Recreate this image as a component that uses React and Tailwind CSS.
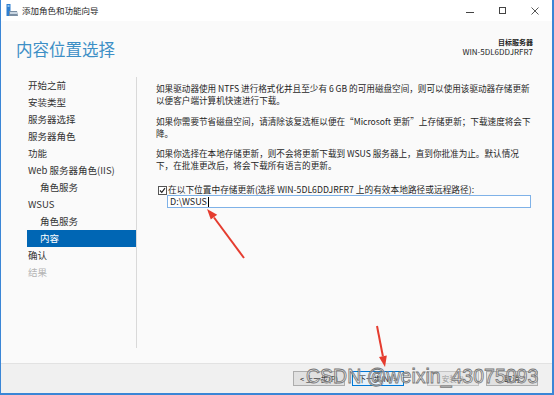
import React from "react";

const navItems = [
  { label: "开始之前" },
  { label: "安装类型" },
  { label: "服务器选择" },
  { label: "服务器角色" },
  { label: "功能" },
  { label: "Web 服务器角色(IIS)" },
  { label: "角色服务", sub: true },
  { label: "WSUS" },
  { label: "角色服务", sub: true },
  { label: "内容", sub: true, active: true },
  { label: "确认" },
  { label: "结果", disabled: true },
];

function TitleIcon() {
  return (
    <svg width="12" height="13" viewBox="0 0 12 13">
      <rect x="0.5" y="0" width="4" height="12" fill="#2f7fd0" />
      <rect x="1.5" y="1" width="2" height="2" fill="#8cc2f0" />
      <path d="M3 7 L11 7 L12 12 L3 12 Z" fill="#7b8fa3" />
      <rect x="4" y="8" width="7" height="2" fill="#c9d6e2" />
    </svg>
  );
}

function Button({ children, variant }) {
  const styles = {
    normal: "bg-[#e1e1e1] border-[#adadad] text-[#1e1e1e]",
    focus: "bg-[#e5f1fb] border-[#0078d7] text-[#1e1e1e]",
    disabled: "bg-[#e6e6e6] border-[#c4c4c4] text-[#9a9a9a]",
  };
  return (
    <div
      className={`w-[52px] h-[15px] border flex items-center justify-center text-[7.5px] leading-none ${styles[variant]}`}
    >
      {children}
    </div>
  );
}

export default function App() {
  return (
    <div className="relative w-[554px] h-[395px] flex flex-col overflow-hidden border-l border-r-2 border-b-2 border-[#3a86d6] bg-[#fafafa] text-[#1e1e1e] font-['Noto_Sans_CJK_SC','Noto_Sans',sans-serif]">
      {/* title bar */}
      <div className="h-[21px] shrink-0 bg-white flex items-center pl-[5px]">
        <TitleIcon />
        <span className="ml-[4px] text-[8.5px] leading-none text-[#1e1e1e]">添加角色和功能向导</span>
        <div className="ml-auto flex items-center h-full text-[#333]">
          <div className="w-[32px] flex justify-center">
            <div className="w-[8px] h-px bg-[#444] mt-[3px]" />
          </div>
          <div className="w-[32px] flex justify-center">
            <div className="w-[7px] h-[7px] border border-[#444]" />
          </div>
          <div className="w-[34px] flex justify-center">
            <svg width="8" height="8" viewBox="0 0 8 8">
              <path d="M0.5 0.5 L7.5 7.5 M7.5 0.5 L0.5 7.5" stroke="#444" strokeWidth="0.9" />
            </svg>
          </div>
        </div>
      </div>

      {/* header */}
      <div className="h-[56px] shrink-0 flex justify-between pl-[15px] pr-[19px]">
        <div className="mt-[18px] text-[16.5px] leading-[20px] text-[#3d8fc6]">内容位置选择</div>
        <div className="mt-[17px] text-right text-[#1e1e1e]">
          <div className="text-[7px] leading-[9px] font-bold">目标服务器</div>
          <div className="text-[8px] leading-[10px]">WIN-5DL6DDJRFR7</div>
        </div>
      </div>

      {/* body */}
      <div className="h-[271px] shrink-0 flex">
        <div className="w-[136px] shrink-0 pl-[26px] border-r border-[#d9d9d9]">
          {navItems.map((item, i) => (
            <div
              key={i}
              className={`h-[17px] leading-[17px] text-[9.5px] whitespace-nowrap ${
                item.sub ? "pl-[13px]" : "pl-[1px]"
              } ${
                item.active
                  ? "bg-[#0066b4] text-white"
                  : item.disabled
                  ? "text-[#b5b5b5]"
                  : "text-[#333]"
              }`}
            >
              {item.label}
            </div>
          ))}
        </div>

        <div className="flex-1 pl-[19px] pr-[20px] pt-[5px] text-[8.6px] leading-[12px] text-[#1e1e1e]">
          <div className="mb-[9px] whitespace-nowrap">
            <div>如果驱动器使用 NTFS 进行格式化并且至少有 6 GB 的可用磁盘空间，则可以使用该驱动器存储更新</div>
            <div>以便客户端计算机快速进行下载。</div>
          </div>
          <div className="mb-[8px] whitespace-nowrap">
            <div>如果你需要节省磁盘空间，请清除该复选框以便在“Microsoft 更新”上存储更新；下载速度将会下</div>
            <div>降。</div>
          </div>
          <div className="whitespace-nowrap">
            <div>如果你选择在本地存储更新，则不会将更新下载到 WSUS 服务器上，直到你批准为止。默认情况</div>
            <div>下，在批准更改后，将会下载所有语言的更新。</div>
          </div>

          <div className="mt-[14px] h-[10px] flex items-center pl-[2px] whitespace-nowrap">
            <svg width="9" height="9" viewBox="0 0 9 9" className="shrink-0">
              <rect x="0.5" y="0.5" width="8" height="8" fill="#fff" stroke="#555" />
              <path d="M2 4.5 L3.8 6.4 L7 2.2" fill="none" stroke="#222" strokeWidth="1.1" />
            </svg>
            <span className="ml-[1px] text-[8.7px] leading-[10px]">
              在以下位置中存储更新(选择 WIN-5DL6DDJRFR7 上的有效本地路径或远程路径):
            </span>
          </div>
          <div className="ml-[11px] w-[364px] h-[13px] border border-[#7fb2e8] bg-white flex items-center pl-[2px] text-[9px] leading-none">
            <span>D:\WSUS</span>
            <span className="w-px h-[10px] bg-black ml-[1px]" />
          </div>
        </div>
      </div>

      <div className="flex-1" />

      {/* footer */}
      <div className="h-[30px] shrink-0 bg-[#f0f0f0] border-t border-[#e2e2e2] flex justify-end items-start pt-[7px] pr-[14px]">
        <Button variant="normal">&lt; 上一步(P)</Button>
        <div className="ml-[7px]">
          <Button variant="focus">下一步(N) &gt;</Button>
        </div>
        <div className="ml-[23px]">
          <Button variant="disabled">安装(I)</Button>
        </div>
        <div className="ml-[7px]">
          <Button variant="normal">取消</Button>
        </div>
      </div>

      {/* annotation arrows */}
      <svg className="absolute left-0 top-0 pointer-events-none" width="554" height="395" viewBox="0 0 554 395">
        <line x1="243" y1="258" x2="213" y2="217.5" stroke="#e53c2f" strokeWidth="2" />
        <polygon points="206,209 216.2,214.8 209.8,219.6" fill="#e53c2f" />
        <line x1="376" y1="326" x2="381.9" y2="356.2" stroke="#e53c2f" strokeWidth="2" />
        <polygon points="384,367 385.8,355.4 378,357" fill="#e53c2f" />
      </svg>

      {/* watermark */}
      <div className="absolute left-[305px] top-[364px] pointer-events-none text-[19.5px] leading-[24px] whitespace-nowrap font-['Liberation_Sans',sans-serif] text-[rgba(235,235,235,0.55)] [-webkit-text-stroke:0.8px_#777]">
        CSDN @weixin_43075093
      </div>
    </div>
  );
}
